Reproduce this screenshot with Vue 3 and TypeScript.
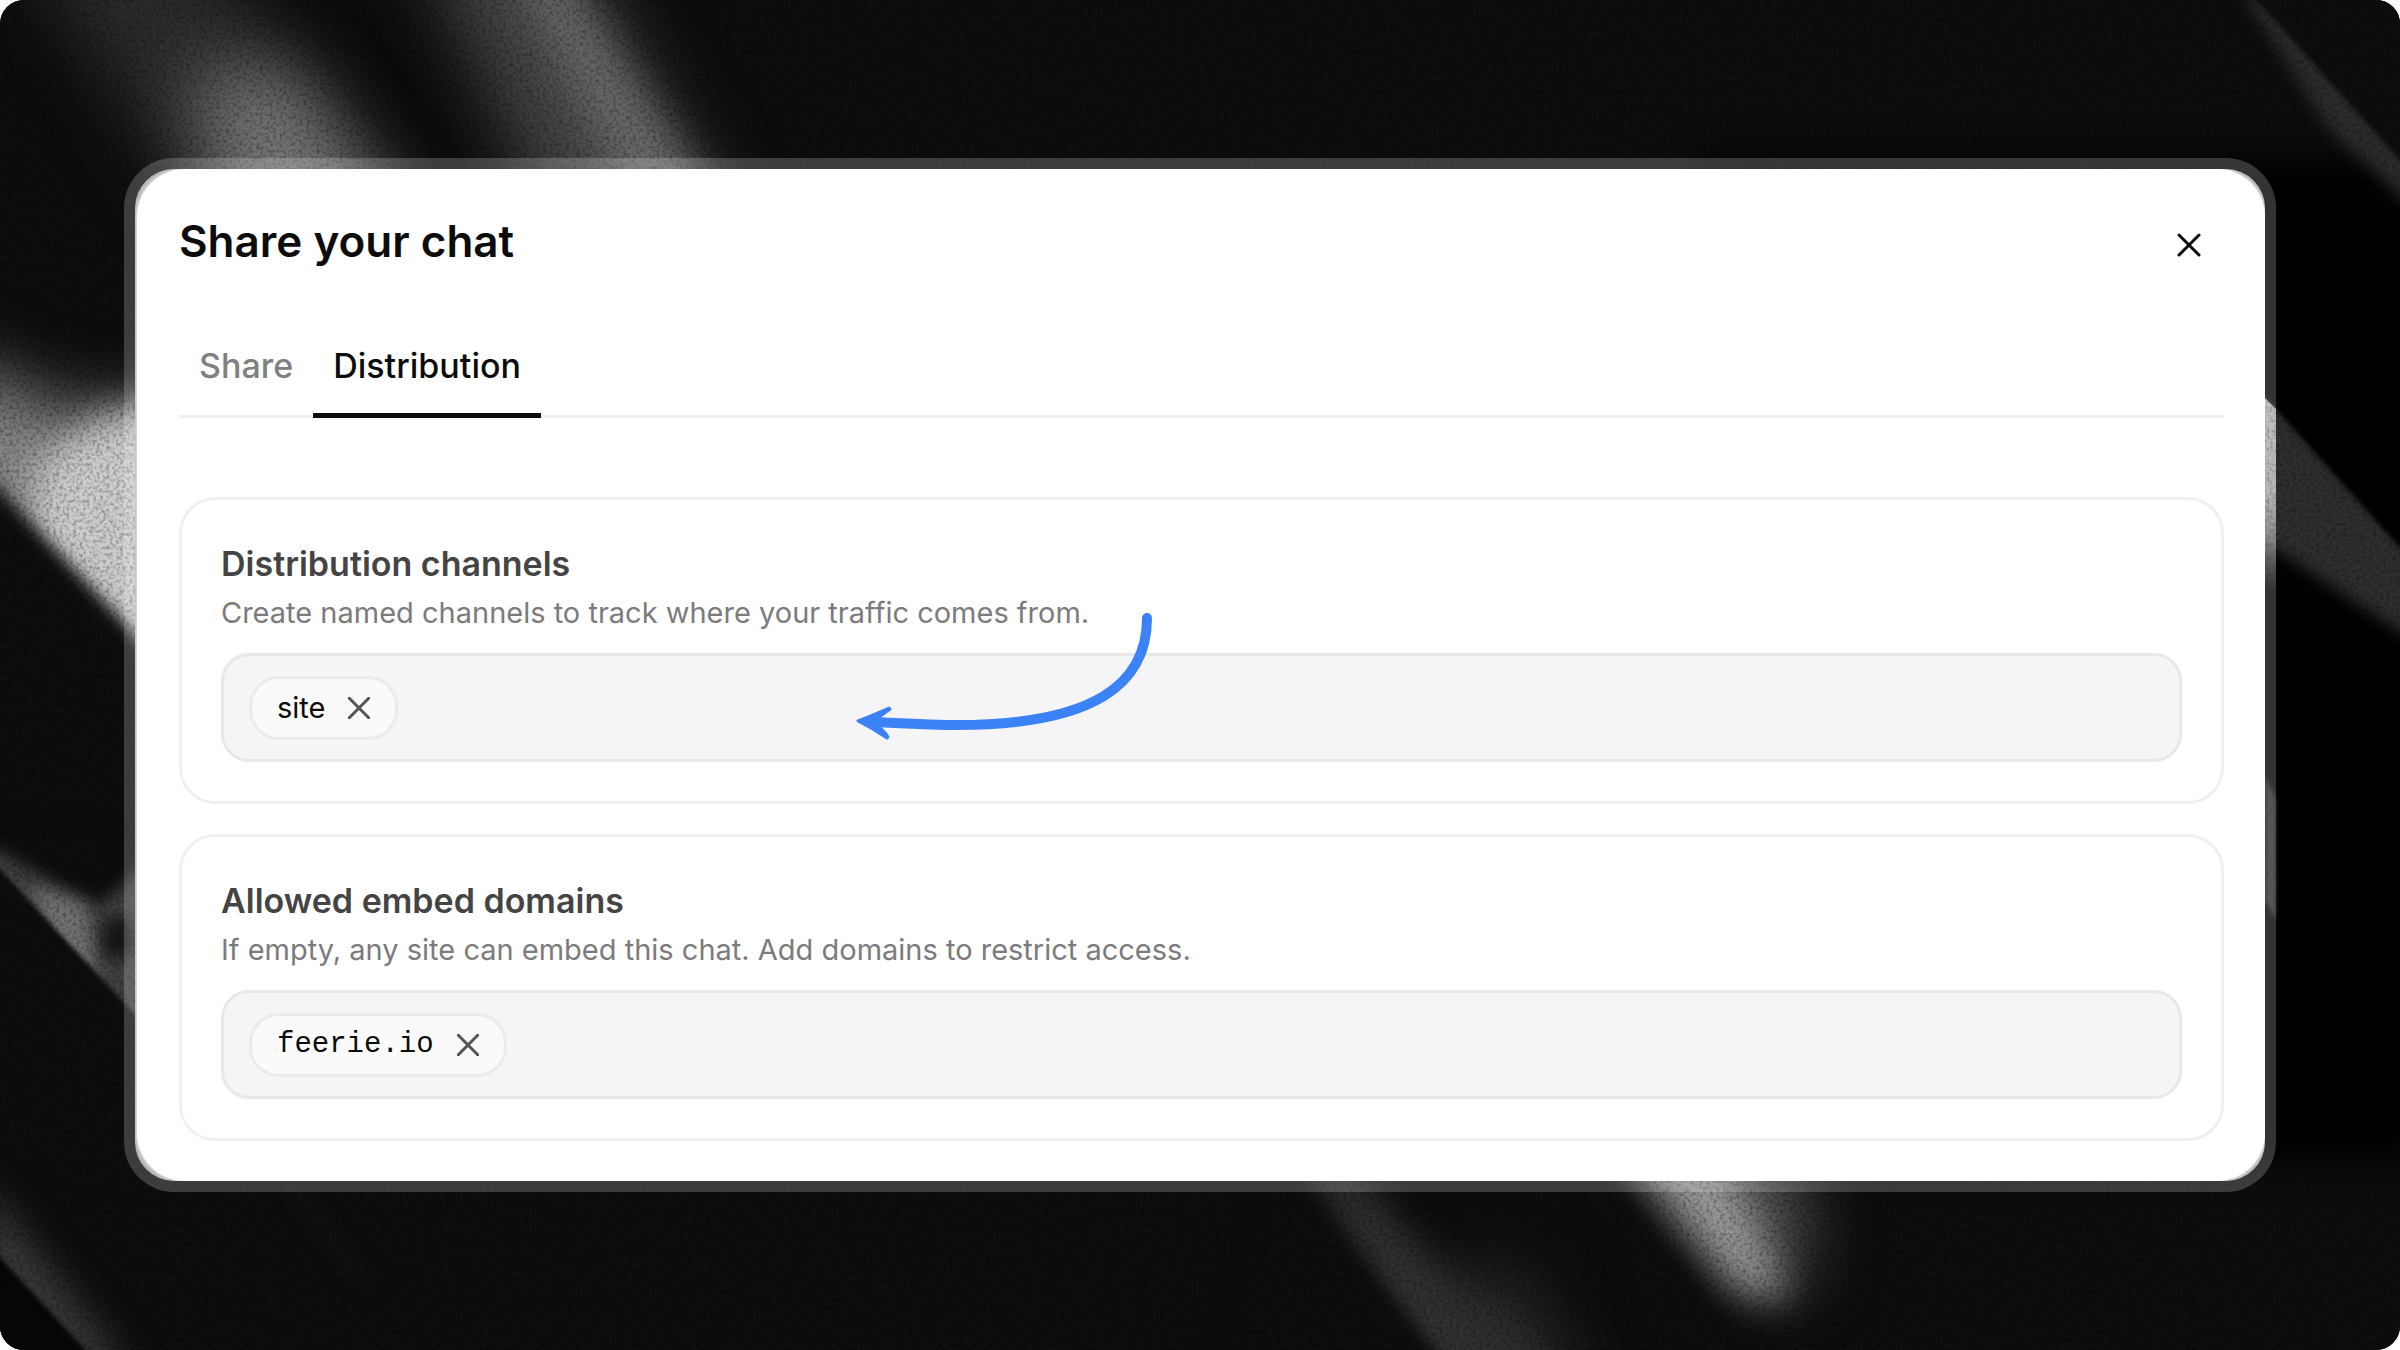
<script setup lang="ts">
import { ref } from 'vue'

interface Section {
  id: string
  title: string
  hint: string
  tags: string[]
  mono: boolean
}

const tabs = ['Share', 'Distribution']
const activeTab = ref('Distribution')

const sections = ref<Section[]>([
  {
    id: 'channels',
    title: 'Distribution channels',
    hint: 'Create named channels to track where your traffic comes from.',
    tags: ['site'],
    mono: false,
  },
  {
    id: 'domains',
    title: 'Allowed embed domains',
    hint: 'If empty, any site can embed this chat. Add domains to restrict access.',
    tags: ['feerie.io'],
    mono: true,
  },
])

function addTag(section: Section, event: Event) {
  const input = event.target as HTMLInputElement
  const value = input.value.trim()
  if (value) section.tags.push(value)
  input.value = ''
}

function removeTag(section: Section, tag: string) {
  section.tags = section.tags.filter((t) => t !== tag)
}
</script>

<template>
  <main class="stage">
    <svg class="backdrop" viewBox="0 0 2400 1350" preserveAspectRatio="none" aria-hidden="true">
      <defs>
        <filter id="soft-xs" x="-20%" y="-20%" width="140%" height="140%" color-interpolation-filters="sRGB"><feGaussianBlur stdDeviation="2" /></filter>
        <filter id="soft-s" x="-20%" y="-20%" width="140%" height="140%" color-interpolation-filters="sRGB"><feGaussianBlur stdDeviation="8" /></filter>
        <filter id="soft-m" x="-60%" y="-60%" width="220%" height="220%" color-interpolation-filters="sRGB"><feGaussianBlur stdDeviation="18" /></filter>
        <filter id="soft-l" x="-80%" y="-80%" width="260%" height="260%" color-interpolation-filters="sRGB"><feGaussianBlur stdDeviation="34" /></filter>
        <filter id="grain" x="0" y="0" width="100%" height="100%" color-interpolation-filters="sRGB">
          <feTurbulence type="fractalNoise" baseFrequency="0.3" numOctaves="2" seed="4" />
          <feColorMatrix type="matrix" values="0 0 0 0 0  0 0 0 0 0  0 0 0 0 0  0.8 0 0 0 -0.34" />
        </filter>
        <linearGradient id="edge-glow" x1="0" y1="0" x2="0" y2="1">
          <stop offset="0" stop-color="#b4b4b4" />
          <stop offset="0.5" stop-color="#a4a4a4" />
          <stop offset="1" stop-color="#a4a4a4" stop-opacity="0" />
        </linearGradient>
      </defs>
      <rect width="2400" height="1350" fill="#0d0d0d" />

      <!-- upper left beams -->
      <path d="M20 -60 L200 -60 L400 200 L200 220 Z" fill="#2c2c2c" filter="url(#soft-l)" />
      <path d="M190 70 L290 70 L410 230 L230 240 Z" fill="#767676" filter="url(#soft-l)" />
      <path d="M420 -60 L570 -60 L740 240 L560 240 Z" fill="#484848" filter="url(#soft-l)" />
      <path d="M510 -40 L565 -20 L705 190 L640 220 Z" fill="#686868" filter="url(#soft-m)" />

      <!-- bright left beam -->
      <path d="M-60 350 L60 410 L200 410 L200 740 L-60 500 Z" fill="#8a8a8a" filter="url(#soft-l)" />
      <path d="M40 460 L110 415 L220 405 L220 760 L30 540 Z" fill="#cdcdcd" filter="url(#soft-m)" />
      <path d="M-40 448 L170 672 L170 820 L-40 820 Z" fill="#0d0d0d" filter="url(#soft-s)" />

      <!-- lower left beams -->
      <path d="M-30 835 L50 880 L100 905 L150 860 L150 1060 L-30 880 Z" fill="#404040" filter="url(#soft-s)" />
      <path d="M30 885 L85 905 L98 980 L50 940 Z" fill="#727272" filter="url(#soft-s)" />
      <ellipse cx="118" cy="938" rx="16" ry="22" fill="#141414" filter="url(#soft-s)" />
      <path d="M-20 848 L140 1020 L140 1200 L-20 1170 Z" fill="#0d0d0d" filter="url(#soft-xs)" />
      <path d="M-20 1180 L130 1370 L70 1370 L-20 1270 Z" fill="#3c3c3c" filter="url(#soft-m)" />
      <path d="M-20 1236 L100 1366 L-20 1366 Z" fill="#060606" filter="url(#soft-xs)" />
      <path d="M282 1185 L296 1185 L380 1290 L350 1275 Z" fill="#131313" filter="url(#soft-s)" />

      <!-- bottom beams -->
      <path d="M1300 1150 L1350 1170 L1560 1400 L1440 1400 Z" fill="#343434" filter="url(#soft-m)" />
      <path d="M1440 1270 L1520 1280 L1590 1420 L1470 1420 Z" fill="#303030" filter="url(#soft-l)" />
      <path d="M1620 1140 L1790 1140 L1810 1260 L1765 1300 Z" fill="#585858" filter="url(#soft-l)" />
      <path d="M1620 1140 L1715 1140 L1790 1300 L1740 1290 Z" fill="#9c9c9c" filter="url(#soft-m)" />
      <path d="M1270 1150 L1450 1370 L1210 1370 Z M1585 1150 L1775 1380 L1650 1380 Z" fill="#0d0d0d" filter="url(#soft-s)" />

      <!-- right side shade and beams -->
      <path d="M1700 160 L2420 160 L2420 1160 L1700 1160 Z" fill="#000" filter="url(#soft-m)" />
      <path d="M2240 -10 L2270 0 L2420 170 L2420 215 L2330 130 Z" fill="#2c2c2c" filter="url(#soft-s)" />
      <path d="M2248 -10 L2420 182 L2420 -10 Z" fill="#0d0d0d" filter="url(#soft-xs)" />
      <path d="M2240 360 L2420 560 L2420 645 L2276 550 L2240 530 Z" fill="#2e2e2e" filter="url(#soft-s)" />
      <path d="M2240 368 L2420 569 L2420 480 L2260 330 Z" fill="#000" filter="url(#soft-xs)" />
      <path d="M2265 398 L2276 409 L2276 590 L2265 590 Z" fill="url(#edge-glow)" />
      <path d="M2265 775 L2276 800 L2276 920 L2265 900 Z" fill="#303030" filter="url(#soft-xs)" />

      <rect width="2400" height="1350" filter="url(#grain)" />
    </svg>

    <div class="frame">
      <div class="sheet">
        <section class="panel" role="dialog" aria-labelledby="dialog-title">
          <header class="head">
            <h1 id="dialog-title">Share your chat</h1>
            <button class="close" type="button" aria-label="Close">
              <svg viewBox="0 0 24 24" width="24" height="24"><path d="M2 2 L22 22 M22 2 L2 22" /></svg>
            </button>
          </header>

          <div class="tabs" role="tablist">
            <button
              v-for="tab in tabs"
              :key="tab"
              type="button"
              role="tab"
              class="tab"
              :class="{ active: tab === activeTab }"
              :aria-selected="tab === activeTab"
              @click="activeTab = tab"
            >{{ tab }}</button>
          </div>

          <div class="cards">
            <article v-for="s in sections" :key="s.id" class="card">
              <label class="card-title" :for="s.id">{{ s.title }}</label>
              <p class="hint">{{ s.hint }}</p>
              <div class="field">
                <span v-for="tag in s.tags" :key="tag" class="chip" :class="{ mono: s.mono }">
                  {{ tag }}
                  <button type="button" :aria-label="`Remove ${tag}`" @click="removeTag(s, tag)">
                    <svg viewBox="0 0 22 22" width="22" height="22"><path d="M1 1 L21 21 M21 1 L1 21" /></svg>
                  </button>
                </span>
                <input :id="s.id" type="text" @keydown.enter="addTag(s, $event)" />
              </div>
              <svg v-if="s.id === 'channels'" class="arrow" viewBox="0 0 310 140" width="310" height="140" aria-hidden="true">
                <path class="shaft" d="M297 18 C297 82 248 127 96 125 C66 124 45 123 24 122" />
                <path class="tip" d="M39 108 C30 112 18 117 8 121 C18 126 28 132 37 138 L38 137 C35 132 31 128 26 125 L26 119 C31 116 36 112 40 109 Z" />
              </svg>
            </article>
          </div>
        </section>
      </div>
    </div>
  </main>
</template>

<style>
body {
  margin: 0;
  background: #fff;
}
</style>

<style scoped>
* {
  box-sizing: border-box;
}
.stage {
  position: relative;
  display: flex;
  align-items: center;
  min-height: 100vh;
  padding: 0 124px;
  overflow: hidden;
  border-radius: 24px;
  background: #0d0d0d;
  font-family: Inter, 'Liberation Sans', sans-serif;
}
.backdrop {
  position: absolute;
  inset: 0;
  width: 100%;
  height: 100%;
}
.frame {
  position: relative;
  flex: 1;
  padding: 11px;
  border-radius: 50px;
  background: rgba(255, 255, 255, 0.2);
}
.sheet {
  padding-left: 2px;
  border-radius: 39px;
  background: #b4b4b4;
  overflow: hidden;
}
.panel {
  padding: 32px 41px 40px 42px;
  border-radius: 48px;
  background: #fff;
  box-shadow: 0 0 4px #fff;
}
.head {
  display: flex;
  align-items: flex-start;
  justify-content: space-between;
  height: 84px;
}
h1 {
  margin: 0;
  padding-top: 10px;
  color: #0c0c0c;
  font-size: 44px;
  font-weight: 600;
  line-height: 60px;
}
button {
  padding: 0;
  border: 0;
  background: none;
  font: inherit;
  cursor: pointer;
}
.close {
  display: flex;
  align-items: center;
  justify-content: center;
  width: 70px;
  height: 88px;
}
.close path {
  fill: none;
  stroke: #0c0c0c;
  stroke-width: 3;
  stroke-linecap: round;
}
.tabs {
  display: flex;
  height: 133px;
  align-items: flex-end;
  box-shadow: inset 0 -3px #f0f0f0;
}
.tab {
  height: 100px;
  padding: 0 20px;
  border-bottom: 5px solid transparent;
  color: #808080;
  font-size: 34px;
  font-weight: 500;
  line-height: 40px;
}
.tab.active {
  border-bottom-color: #0c0c0c;
  color: #0c0c0c;
}
.cards {
  display: flex;
  flex-direction: column;
  gap: 30px;
  padding-top: 79px;
}
.card {
  position: relative;
  padding: 39px;
  border: 3px solid #f0f0f0;
  border-radius: 36px;
}
.card-title {
  display: block;
  padding-top: 3px;
  color: #444;
  font-size: 34px;
  font-weight: 600;
  line-height: 44px;
}
.hint {
  margin: 0 0 13px;
  color: #7b7b7d;
  font-size: 29px;
  line-height: 54px;
}
.field {
  display: flex;
  align-items: center;
  gap: 12px;
  height: 109px;
  padding: 0 25px;
  border: 3px solid #e8e8e8;
  border-radius: 28px;
  background: #f5f5f7;
}
.field input {
  flex: 1;
  min-width: 0;
  border: 0;
  outline: 0;
  background: none;
  font: inherit;
  font-size: 29px;
}
.chip {
  display: flex;
  align-items: center;
  gap: 23px;
  height: 64px;
  padding: 0 25px;
  border: 3px solid #ebebeb;
  border-radius: 30px;
  background: #fafafa;
  color: #0c0c0c;
  font-size: 29px;
}
.chip.mono {
  font-family: 'Liberation Mono', monospace;
}
.chip button,
.chip svg {
  display: block;
}
.chip path {
  fill: none;
  stroke: #555;
  stroke-width: 3;
  stroke-linecap: round;
}
.arrow {
  position: absolute;
  left: 668px;
  top: 100px;
}
.arrow .shaft {
  fill: none;
  stroke: #3b82f6;
  stroke-width: 10;
  stroke-linecap: round;
}
.arrow .tip {
  fill: #3b82f6;
  stroke: #3b82f6;
  stroke-width: 3;
  stroke-linejoin: round;
}
</style>
